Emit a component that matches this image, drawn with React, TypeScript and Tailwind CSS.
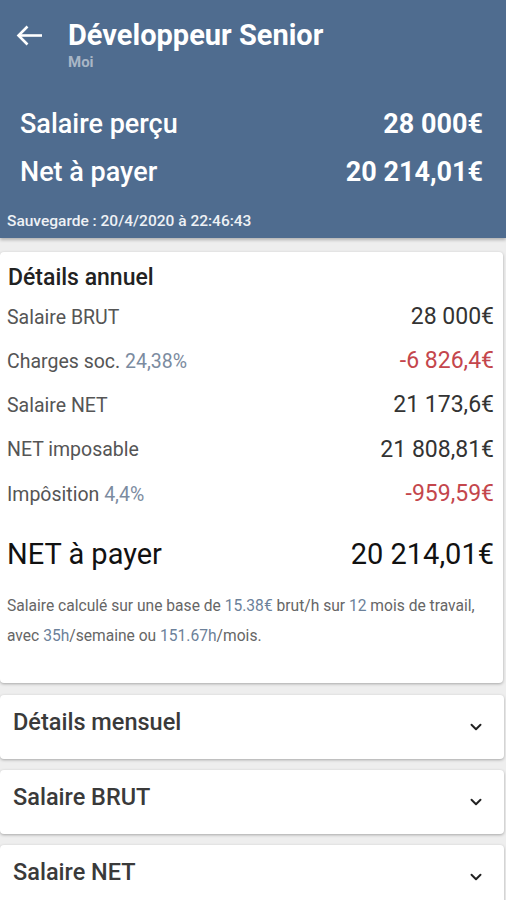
import { ChevronDown } from 'lucide-react';

const rows = [
  { label: 'Salaire BRUT', hint: '', value: '28 000€', negative: false },
  { label: 'Charges soc.', hint: '24,38%', value: '-6 826,4€', negative: true },
  { label: 'Salaire NET', hint: '', value: '21 173,6€', negative: false },
  { label: 'NET imposable', hint: '', value: '21 808,81€', negative: false },
  { label: 'Impôsition', hint: '4,4%', value: '-959,59€', negative: true },
];

const sections = ['Détails mensuel', 'Salaire BRUT', 'Salaire NET'];

function BackArrow() {
  return (
    <svg width="27" height="21" viewBox="0 0 27 21" fill="none" stroke="currentColor" strokeWidth="2.6">
      <path d="M26 10.5H2.5" />
      <path d="M11.5 1.5L2.5 10.5l9 9" strokeLinejoin="miter" />
    </svg>
  );
}

export default function App() {
  return (
    <div className="min-h-[900px] w-[506px] overflow-hidden bg-[#eeeeee] font-['Roboto',sans-serif]">
      {/* Header */}
      <div className="h-[238px] bg-[#4f6c8f] pt-[19px] text-white shadow-[0_2px_3px_rgba(0,0,0,0.25)]">
        <div className="flex items-start">
          <div className="ml-[16px] mt-[6px]">
            <BackArrow />
          </div>
          <div className="ml-[25px]">
            <h1 className="text-[29px] font-bold leading-[32px]">Développeur Senior</h1>
            <p className="mt-[2px] text-[15px] font-bold leading-[18px] text-[#a9b6c6]">Moi</p>
          </div>
        </div>

        <div className="mt-[29px] pl-[20px] pr-[23px]">
          <div className="flex items-center justify-between text-[27px] font-medium leading-[48px]">
            <span>Salaire perçu</span>
            <span className="font-bold">28 000€</span>
          </div>
          <div className="flex items-center justify-between text-[27px] font-medium leading-[48px]">
            <span>Net à payer</span>
            <span className="font-bold">20 214,01€</span>
          </div>
        </div>

        <p className="mt-[15px] pl-[7px] text-[15.5px] font-medium leading-[20px] text-[#eef1f5]">
          Sauvegarde : 20/4/2020 à 22:46:43
        </p>
      </div>

      {/* Annual details */}
      <div className="mr-[3px] mt-[14px] rounded-[4px] bg-white pb-[32px] pl-[7px] pr-[9px] pt-[12px] shadow-[0_1px_3px_rgba(0,0,0,0.3)]">
        <h2 className="pl-[1px] text-[23px] font-medium leading-[28px] text-[#222222]">Détails annuel</h2>

        <div className="mt-[3px]">
          {rows.map((row) => (
            <div key={row.label} className="flex h-[44.25px] items-center justify-between">
              <span className="text-[19.5px] text-[#555555]">
                {row.label} {row.hint && <span className="text-[#7b8ba0]">{row.hint}</span>}
              </span>
              <span className={row.negative ? 'text-[23px] text-[#c4464c]' : 'text-[23px] text-[#333333]'}>
                {row.value}
              </span>
            </div>
          ))}
        </div>

        <div className="mt-[16px] flex h-[44px] items-center justify-between text-[29px] text-[#111111]">
          <span>NET à payer</span>
          <span>20 214,01€</span>
        </div>

        <p className="mt-[15px] text-[15.6px] leading-[30px] text-[#666666]">
          Salaire calculé sur une base de <span className="text-[#6c819a]">15.38€</span> brut/h sur{' '}
          <span className="text-[#6c819a]">12</span> mois de travail,
          <br />
          avec <span className="text-[#6c819a]">35h</span>/semaine ou <span className="text-[#6c819a]">151.67h</span>/mois.
        </p>
      </div>

      {/* Collapsed sections */}
      <div className="mt-[12px] flex flex-col gap-[11px]">
        {sections.map((title) => (
          <div
            key={title}
            className="mr-[2px] flex h-[64px] items-start justify-between rounded-[4px] bg-white pl-[13px] pr-[19px] pt-[13px] shadow-[0_1px_3px_rgba(0,0,0,0.3)]"
          >
            <span className="text-[23.5px] font-medium leading-[28px] text-[#3a3a3a]">{title}</span>
            <ChevronDown className="mt-[10px] h-[18px] w-[18px] text-[#222222]" strokeWidth={2.6} />
          </div>
        ))}
      </div>
    </div>
  );
}
